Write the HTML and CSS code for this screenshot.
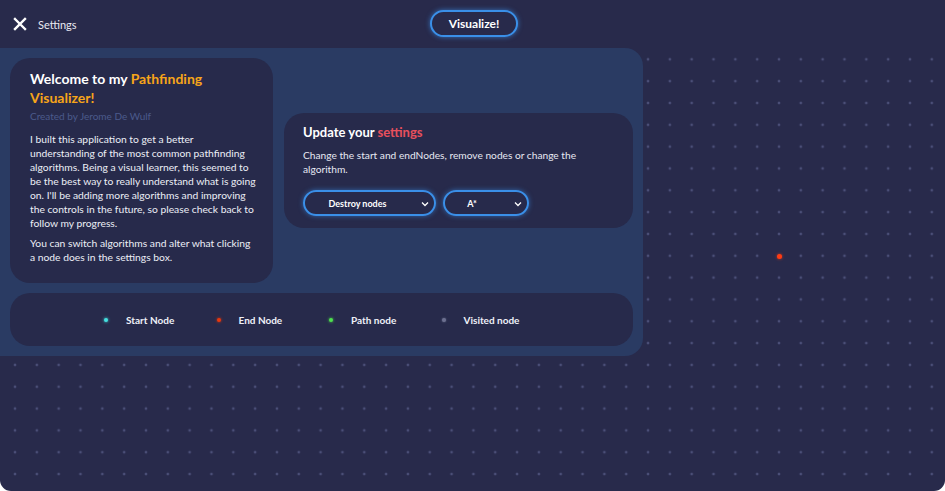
FILE: index.html
```html
<!DOCTYPE html>
<html>
<head>
<meta charset="utf-8">
<link rel="stylesheet" href="styles.css">
</head>
<body>
<div class="app">
  <header class="topbar">
    <div class="settings-toggle">
      <svg class="close-icon" width="14" height="14" viewBox="0 0 14 14"><path d="M2 2 L12 12 M12 2 L2 12" stroke="#ffffff" stroke-width="2.4" stroke-linecap="square"/></svg>
      <span class="settings-label">Settings</span>
    </div>
    <button class="visualize-btn">Visualize!</button>
  </header>
  <main class="board">
    <span class="node-end"></span>
    <section class="panel">
      <div class="panel-top">
        <article class="card welcome">
          <h1 class="welcome-title">Welcome to my <span class="accent-orange">Pathfinding Visualizer!</span></h1>
          <p class="author">Created by Jerome De Wulf</p>
          <p class="body-text">I built this application to get a better understanding of the most common pathfinding algorithms. Being a visual learner, this seemed to be the best way to really understand what is going on. I'll be adding more algorithms and improving the controls in the future, so please check back to follow my progress.</p>
          <p class="body-text body-note">You can switch algorithms and alter what clicking a node does in the settings box.</p>
        </article>
        <div class="settings-wrap">
          <article class="card settings">
            <h2 class="settings-title">Update your <span class="accent-red">settings</span></h2>
            <p class="settings-desc">Change the start and endNodes, remove nodes or change the algorithm.</p>
            <div class="selects">
              <div class="select select-mode"><span>Destroy nodes</span><svg class="chev" width="8" height="6" viewBox="0 0 8 6"><path d="M1 1.5 L4 4.5 L7 1.5" fill="none" stroke="#ffffff" stroke-width="1.3"/></svg></div>
              <div class="select select-algo"><span>A*</span><svg class="chev" width="8" height="6" viewBox="0 0 8 6"><path d="M1 1.5 L4 4.5 L7 1.5" fill="none" stroke="#ffffff" stroke-width="1.3"/></svg></div>
            </div>
          </article>
        </div>
      </div>
      <article class="card legend">
        <div class="legend-item"><span class="dot dot-start"></span>Start Node</div>
        <div class="legend-item"><span class="dot dot-end"></span>End Node</div>
        <div class="legend-item"><span class="dot dot-path"></span>Path node</div>
        <div class="legend-item"><span class="dot dot-visited"></span>Visited node</div>
      </article>
    </section>
  </main>
</div>
</body>
</html>
```

FILE: styles.css
```css
* { box-sizing: border-box; }
html, body { margin: 0; padding: 0; background: #ffffff; }
body { font-family: Lato, "Noto Sans", sans-serif; color: #ffffff; }

.app {
  width: 945px;
  height: 491px;
  background: #282a4b;
  border-radius: 0 0 11px 11px;
  overflow: hidden;
  display: flex;
  flex-direction: column;
}

.topbar {
  height: 48px;
  flex: none;
  display: flex;
  align-items: center;
  position: relative;
  padding-left: 13px;
}
.settings-toggle { display: flex; align-items: center; gap: 11px; }
.close-icon { display: block; }
.settings-label { font-size: 11px; color: #e8e9f2; }

.visualize-btn {
  position: absolute;
  left: 430px;
  top: 10px;
  width: 88px;
  height: 27px;
  border-radius: 14px;
  border: 2px solid #3a8fe8;
  background: #282a4b;
  box-shadow: 0 0 5px rgba(58,143,232,0.7);
  color: #ffffff;
  font-family: Lato, "Noto Sans", sans-serif;
  font-weight: 700;
  font-size: 12px;
  padding: 0;
}

.board {
  flex: 1;
  position: relative;
  background-image: radial-gradient(circle, rgba(110,116,165,0.5) 0, rgba(110,116,165,0.5) 1.1px, transparent 1.7px);
  background-size: 21.83px 21.83px;
  background-position: 4.1px 0.4px;
}

.node-end {
  position: absolute;
  left: 776.5px;
  top: 205.5px;
  width: 5px;
  height: 5px;
  border-radius: 50%;
  background: #ff3b12;
  box-shadow: 0 0 3px rgba(255,60,20,0.8);
}

.panel {
  position: absolute;
  left: 0;
  top: 0;
  width: 643px;
  height: 308px;
  background: #2a3b63;
  border-radius: 0 18px 18px 0;
  padding: 10px;
  display: flex;
  flex-direction: column;
  gap: 10px;
}

.panel-top { display: flex; gap: 11px; height: 225px; }

.card {
  background: #272a4b;
  border-radius: 20px;
}

.welcome {
  width: 263px;
  flex: none;
  padding: 11px 12px 0 20px;
}
.welcome-title {
  margin: 0;
  font-size: 14px;
  line-height: 19px;
  font-weight: 700;
  color: #ffffff;
}
.accent-orange { color: #f7a519; }
.author {
  margin: 2px 0 0 0;
  font-size: 10px;
  line-height: 14px;
  color: #4b5a8c;
}
.body-text {
  margin: 9px 0 0 0;
  max-width: 230px;
  font-size: 10.3px;
  line-height: 14px;
  color: #eceef6;
}
.body-text + .body-text { margin-top: 6px; }
.body-note { max-width: 224px; }

.settings-wrap { flex: 1; display: flex; align-items: center; }
.settings {
  width: 100%;
  height: 115px;
  padding: 11px 19px 0 19px;
}
.settings-title {
  margin: 0;
  font-size: 13px;
  line-height: 17px;
  font-weight: 700;
}
.accent-red { color: #e8505d; }
.settings-desc {
  margin: 7px 0 0 0;
  max-width: 285px;
  font-size: 10.2px;
  line-height: 14px;
  color: #e6e8f2;
}
.selects { display: flex; gap: 7px; margin-top: 14px; }
.select {
  height: 26px;
  border-radius: 13px;
  border: 2px solid #3a8fe8;
  box-shadow: 0 0 5px rgba(58,143,232,0.6);
  display: flex;
  align-items: center;
  justify-content: center;
  position: relative;
  font-size: 9px;
  font-weight: 700;
}
.select-mode { width: 133px; padding-right: 24px; }
.select-algo { width: 86px; padding-right: 28px; }
.chev { position: absolute; right: 5px; top: 9px; }

.legend {
  height: 53px;
  display: flex;
  align-items: center;
  padding-left: 94px;
}
.legend-item {
  width: 112.5px;
  display: flex;
  align-items: center;
  font-size: 10px;
  font-weight: 700;
  color: #eef0f8;
}
.dot {
  width: 4px;
  height: 4px;
  border-radius: 50%;
  margin-right: 18px;
}
.dot-start { background: #45e0e0; box-shadow: 0 0 3px #45e0e0; }
.dot-end { background: #e8380e; box-shadow: 0 0 3px #e8380e; }
.dot-path { background: #4fe04f; box-shadow: 0 0 3px #4fe04f; }
.dot-visited { background: #6c7090; box-shadow: 0 0 2px #6c7090; }
```
